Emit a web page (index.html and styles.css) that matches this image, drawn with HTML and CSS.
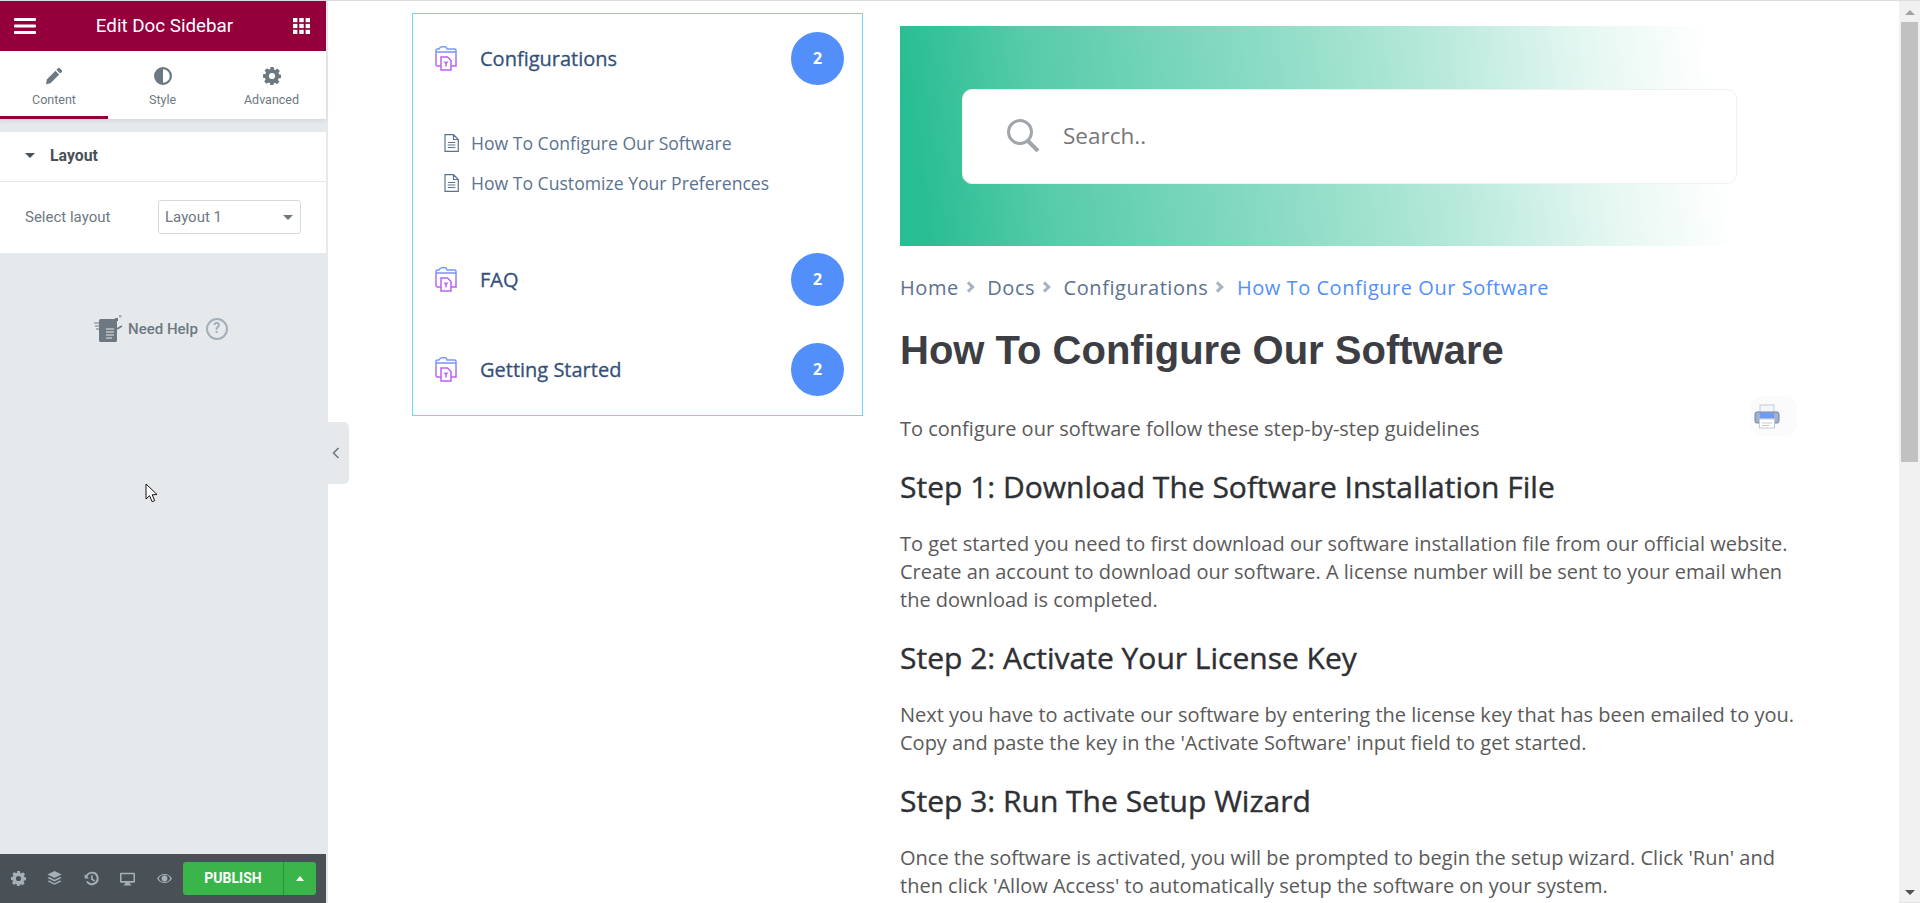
FILE: index.html
```html
<!DOCTYPE html>
<html lang="en">
<head>
    <meta charset="UTF-8">
    <meta name="viewport" content="width=device-width, initial-scale=1.0">
    <title>Edit Doc Sidebar</title>
    <link rel="stylesheet" href="styles.css">
</head>
<body>
    <aside class="editor">
        <header class="editor-head">
            <svg class="head-icon" viewBox="0 0 22 16"><rect width="22" height="3" y="0" rx="1"/><rect width="22" height="3" y="6.5" rx="1"/><rect width="22" height="3" y="13" rx="1"/></svg>
            <span class="editor-title">Edit Doc Sidebar</span>
            <svg class="head-icon grid-icon" viewBox="0 0 17 16"><rect width="4.4" height="4.2"/><rect x="6.3" width="4.4" height="4.2"/><rect x="12.6" width="4.4" height="4.2"/><rect y="5.9" width="4.4" height="4.2"/><rect x="6.3" y="5.9" width="4.4" height="4.2"/><rect x="12.6" y="5.9" width="4.4" height="4.2"/><rect y="11.8" width="4.4" height="4.2"/><rect x="6.3" y="11.8" width="4.4" height="4.2"/><rect x="12.6" y="11.8" width="4.4" height="4.2"/></svg>
        </header>

        <nav class="tabs">
            <div class="tab tab-active">
                <svg class="tab-icon" viewBox="0 0 18 18"><path d="M13 1.2a1.3 1.3 0 0 1 1.8 0l2 2a1.3 1.3 0 0 1 0 1.8l-1.6 1.6-3.8-3.8zM10.400 3.800l3.800 3.800-8.700 8.700-4.500 1 .8-4.700z"/></svg>
                <span>Content</span>
            </div>
            <div class="tab">
                <svg class="tab-icon" viewBox="0 0 18 18"><path fill-rule="evenodd" d="M9 0a9 9 0 1 1 0 18A9 9 0 0 1 9 0zm0 2.200v13.600a6.800 6.800 0 0 0 0-13.600z"/></svg>
                <span>Style</span>
            </div>
            <div class="tab">
                <svg class="tab-icon" viewBox="0 0 18 18"><path fill-rule="evenodd" d="M7.300 0h3.400l.4 2.400 1.300.6 2-1.400 2.400 2.400-1.400 2 .6 1.300 2 .4v3.400l-2.400.4-.6 1.300 1.400 2-2.400 2.400-2-1.400-1.300.6-.4 2H7.300l-.4-2.400-1.300-.6-2 1.400-2.400-2.400 1.400-2-.6-1.300-2-.4V7.300l2.400-.4.6-1.300-1.400-2 2.400-2.400 2 1.400 1.300-.6zM9 5.900a3.100 3.100 0 1 0 0 6.200 3.100 3.100 0 0 0 0-6.200z"/></svg>
                <span>Advanced</span>
            </div>
        </nav>

        <section class="panel">
            <div class="panel-title"><i class="caret"></i>Layout</div>
            <div class="panel-row">
                <span class="field-label">Select layout</span>
                <div class="select-box">Layout 1<i class="caret caret-small"></i></div>
            </div>
        </section>

        <div class="need-help">
            <svg class="help-doc" viewBox="0 0 30 28">
                <rect x="6" y="4" width="18" height="23" rx="1.500" fill="#6d7882"/>
                <path d="M1 8h7M2 11h6M3 14h5" stroke="#6d7882" stroke-width="1.200" fill="none"/>
                <path d="M13 14h8M13 17h8M13 20h8M13 23h6" stroke="#e6e9ec" stroke-width="1" fill="none"/>
                <path d="M24 14l5-3" stroke="#6d7882" stroke-width="1.500" fill="none"/>
                <rect x="22" y="3" width="3" height="3" fill="#6d7882"/>
                <rect x="26" y="0" width="2.500" height="2.500" fill="#a4afb7"/>
            </svg>
            <span>Need Help</span>
            <span class="help-q">?</span>
        </div>

        <footer class="editor-foot">
            <svg class="foot-icon" viewBox="0 0 18 18"><path fill-rule="evenodd" d="M7.300 0h3.400l.4 2.400 1.300.6 2-1.400 2.400 2.400-1.400 2 .6 1.300 2 .4v3.400l-2.400.4-.6 1.300 1.400 2-2.400 2.400-2-1.400-1.300.6-.4 2H7.300l-.4-2.400-1.300-.6-2 1.400-2.400-2.400 1.400-2-.6-1.300-2-.4V7.300l2.400-.4.6-1.300-1.400-2 2.400-2.400 2 1.400 1.300-.6zM9 5.900a3.100 3.100 0 1 0 0 6.200 3.100 3.100 0 0 0 0-6.200z"/></svg>
            <svg class="foot-icon" viewBox="0 0 18 18"><path d="M9 0l8.500 4.200L9 8.400.5 4.200z"/><path d="M2.500 7.300L9 10.500l6.500-3.200 2 1L9 12.500.5 8.300z"/><path d="M2.500 11.400L9 14.600l6.500-3.200 2 1L9 16.600.5 12.400z"/></svg>
            <svg class="foot-icon" viewBox="0 0 18 18"><path d="M9.500 1a8 8 0 1 1-6.900 12l1.900-1.100a5.800 5.800 0 1 0-.5-5l2 2H.8V3.700l1.700 1.700A8 8 0 0 1 9.500 1z"/><path d="M8.500 5h2v4.300l2.800 1.700-1 1.700-3.800-2.300z"/></svg>
            <svg class="foot-icon" viewBox="0 0 18 18"><path fill-rule="evenodd" d="M1 2h16a1 1 0 0 1 1 1v10a1 1 0 0 1-1 1h-5.500l.5 2h1.500v1.500h-9V16H6l.5-2H1a1 1 0 0 1-1-1V3a1 1 0 0 1 1-1zm.8 1.800V12h14.400V3.800z"/></svg>
            <svg class="foot-icon" viewBox="0 0 18 18"><path fill-rule="evenodd" d="M9 3.500c4 0 7.300 2.400 9 5.500-1.700 3.100-5 5.500-9 5.500S1.700 12.100 0 9c1.700-3.100 5-5.500 9-5.500zM9 5a6.500 6.500 0 0 0-6.900 4A6.500 6.500 0 0 0 9 13a6.500 6.500 0 0 0 6.900-4A6.500 6.500 0 0 0 9 5zm0 .5a3.500 3.500 0 1 1 0 7 3.500 3.500 0 0 1 0-7z"/></svg>
            <div class="publish">
                <span class="publish-main">PUBLISH</span>
                <span class="publish-more"><i class="caret-up"></i></span>
            </div>
        </footer>

        <div class="collapse-handle">
            <svg viewBox="0 0 8 12"><path d="M6.500 1L1.500 6l5 5" fill="none" stroke="#6d7882" stroke-width="1.600"/></svg>
        </div>

        <svg class="cursor" viewBox="0 0 13 20"><path d="M1 1v15l3.600-3.300 2.500 6 2.600-1.100-2.500-5.800 4.800-.3z" fill="#fff" stroke="#111" stroke-width="1"/></svg>
    </aside>

    <main class="page">
        <div class="doc-nav">
            <div class="doc-cat">
                <div class="cat-head">
                    <svg class="cat-icon" viewBox="0 0 22 26"><use href="#folderDoc"/></svg>
                    <span class="cat-name">Configurations</span>
                    <span class="cat-count">2</span>
                </div>
                <ul class="cat-list">
                    <li>
                        <svg class="file-icon" viewBox="0 0 15 18"><path d="M1 .7h8.500L14.300 5.500V17.300H1zM9.500 .7V5.500h4.800M3.800 8.500h7.500M3.800 11h7.500M3.800 13.500h7.500" fill="none" stroke="#5b7290" stroke-width="1.200"/></svg>
                        How To Configure Our Software
                    </li>
                    <li>
                        <svg class="file-icon" viewBox="0 0 15 18"><path d="M1 .7h8.500L14.300 5.500V17.300H1zM9.500 .7V5.500h4.800M3.800 8.500h7.500M3.800 11h7.500M3.800 13.500h7.500" fill="none" stroke="#5b7290" stroke-width="1.200"/></svg>
                        How To Customize Your Preferences
                    </li>
                </ul>
            </div>
            <div class="doc-cat">
                <div class="cat-head">
                    <svg class="cat-icon" viewBox="0 0 22 26"><use href="#folderDoc"/></svg>
                    <span class="cat-name">FAQ</span>
                    <span class="cat-count">2</span>
                </div>
            </div>
            <div class="doc-cat">
                <div class="cat-head">
                    <svg class="cat-icon" viewBox="0 0 22 26"><use href="#folderDoc"/></svg>
                    <span class="cat-name">Getting Started</span>
                    <span class="cat-count">2</span>
                </div>
            </div>
        </div>

        <article class="doc">
            <div class="hero">
                <div class="search-box">
                    <svg class="search-icon" viewBox="0 0 34 34"><circle cx="14" cy="14" r="11.500" fill="none" stroke="#a1a6ab" stroke-width="3"/><path d="M22 23l10 10" stroke="#a1a6ab" stroke-width="4"/></svg>
                    <span class="search-text">Search..</span>
                </div>
            </div>

            <div class="crumbs">
                <span>Home</span><i class="crumb-sep"></i>
                <span>Docs</span><i class="crumb-sep"></i>
                <span>Configurations</span><i class="crumb-sep"></i>
                <span class="crumb-current">How To Configure Our Software</span>
            </div>

            <h1>How To Configure Our Software</h1>

            <div class="intro">
                <p>To configure our software follow these step-by-step guidelines</p>
                <div class="print-btn">
                    <svg viewBox="0 0 26 25">
                        <rect x="6" y="1" width="14" height="9" fill="#f3f5f9" stroke="#c3cad6"/>
                        <rect x="1" y="8" width="24" height="11" rx="2" fill="#9fb2cc" stroke="#6f84a3"/>
                        <rect x="6" y="9" width="14" height="5" fill="#6f9cf2"/>
                        <rect x="5.500" y="15" width="15" height="9" fill="#fff" stroke="#c3cad6"/>
                        <path d="M8 19h10M8 21.500h7" stroke="#c3cad6"/>
                    </svg>
                </div>
            </div>

            <h2>Step 1: Download The Software Installation File</h2>
            <p>To get started you need to first download our software installation file from our official website. Create an account to download our software. A license number will be sent to your email when the download is completed.</p>

            <h2>Step 2: Activate Your License Key</h2>
            <p>Next you have to activate our software by entering the license key that has been emailed to you. Copy and paste the key in the 'Activate Software' input field to get started.</p>

            <h2>Step 3: Run The Setup Wizard</h2>
            <p>Once the software is activated, you will be prompted to begin the setup wizard. Click 'Run' and then click 'Allow Access' to automatically setup the software on your system.</p>
        </article>

        <div class="scrollbar">
            <i class="arrow-up"></i>
            <div class="scroll-thumb"></div>
            <i class="arrow-down"></i>
        </div>
    </main>

    <!-- icon shared by the three doc categories -->
    <svg class="icon-defs" width="0" height="0">
        <defs>
            <linearGradient id="folderGrad" x1="0" y1="0" x2="0" y2="1">
                <stop offset="0" stop-color="#6aa2f7"/>
                <stop offset="1" stop-color="#c35cf5"/>
            </linearGradient>
            <g id="folderDoc">
                <path d="M1 6V4.500Q1 3 2.500 3H4Q5 .8 7 .8h3.500Q11.500 .8 12 3h7.500Q21 3 21 4.500V20H14M6 20H2.500Q1 20 1 18.500V6H21" fill="none" stroke="url(#folderGrad)" stroke-width="1.500"/>
                <path d="M6 11h6.500L16 14.500V24H6z" fill="#fff" stroke="#bd62f6" stroke-width="1.500"/>
                <path d="M8.500 15.500h5L11.800 18v2.500h-1.600V18z" fill="#b576ee"/>
            </g>
        </defs>
    </svg>
</body>
</html>
```

FILE: styles.css
```css
* {
    box-sizing: border-box;
}
html, body {
    height: 100%;
}
body {
    display: flex;
    margin: 0;
    overflow: hidden;
    border-top: 1px solid #dcdde1;
    background-color: #fff;
    font-family: "Open Sans", sans-serif;
}

/* editor panel on the left */
.editor {
    position: relative;
    display: flex;
    flex-direction: column;
    flex: none;
    width: 328px;
    padding-right: 2px;
    background-color: #e6e9ec;
    font-family: Roboto, sans-serif;
}
.editor-head {
    display: flex;
    align-items: center;
    justify-content: space-between;
    height: 50px;
    padding: 0 16px 0 14px;
    background-color: #93003c;
    color: #fff;
}
.editor-title {
    font-size: 18.8px;
}
.head-icon {
    width: 22px;
    height: 16px;
    fill: #fff;
}
.grid-icon {
    width: 17px;
}
.tabs {
    display: flex;
    height: 68px;
    background-color: #fff;
    box-shadow: 0 2px 4px rgba(0, 0, 0, 0.08);
}
.tab {
    display: flex;
    flex: 1;
    flex-direction: column;
    align-items: center;
    padding-top: 16px;
    color: #6d7882;
    font-size: 12.5px;
}
.tab-active {
    flex: none;
    width: 108px;
    border-bottom: 3px solid #93003c;
}
.tab-icon {
    width: 18px;
    height: 18px;
    margin-bottom: 7px;
    fill: #6d7882;
}
.panel {
    margin-top: 13px;
    background-color: #fff;
}
.panel-title {
    display: flex;
    align-items: center;
    height: 50px;
    padding: 0 0 2px 25px;
    border-bottom: 1px solid #e6e9ec;
    color: #495157;
    font-size: 15.8px;
    font-weight: 700;
}
.caret {
    width: 0;
    height: 0;
    margin-right: 15px;
    border-top: 5px solid #495157;
    border-right: 5px solid transparent;
    border-left: 5px solid transparent;
}
.panel-row {
    display: flex;
    align-items: center;
    justify-content: space-between;
    height: 71px;
    padding: 0 25px 1px;
}
.field-label {
    color: #6d7882;
    font-size: 15px;
}
.select-box {
    display: flex;
    align-items: center;
    justify-content: space-between;
    width: 143px;
    height: 34px;
    padding: 0 7px 0 6px;
    border: 1px solid #d5dadf;
    border-radius: 3px;
    color: #6d7882;
    font-size: 15px;
}
.caret-small {
    margin-right: 0;
    border-top-color: #6d7882;
}
.need-help {
    display: flex;
    align-items: center;
    margin: 62px 0 0 93px;
    color: #6d7882;
    font-size: 15px;
    font-weight: 500;
}
.help-doc {
    width: 30px;
    height: 28px;
    margin-right: 5px;
}
.help-q {
    width: 22px;
    height: 22px;
    margin-left: 8px;
    border: 2.5px solid #a4afb7;
    border-radius: 50%;
    color: #a4afb7;
    font-size: 14px;
    font-weight: 700;
    line-height: 17px;
    text-align: center;
}
.editor-foot {
    display: flex;
    align-items: center;
    height: 49px;
    margin-top: auto;
    padding: 0 10px 0 10.5px;
    background-color: #495157;
}
.foot-icon {
    flex: none;
    width: 15px;
    height: 15px;
    margin-right: 21.5px;
    fill: #a4afb7;
}
.publish {
    display: flex;
    height: 33px;
    margin-left: -10px;
    border-radius: 3px;
    background-color: #39b54a;
    color: #fff;
}
.publish-main {
    width: 101px;
    border-right: 1px solid #2d8f3b;
    font-size: 14px;
    font-weight: 700;
    line-height: 33px;
    text-align: center;
}
.publish-more {
    display: flex;
    align-items: center;
    justify-content: center;
    width: 32px;
}
.caret-up {
    width: 0;
    height: 0;
    border-right: 4.500px solid transparent;
    border-bottom: 5px solid #fff;
    border-left: 4.500px solid transparent;
}
.collapse-handle {
    position: absolute;
    top: 421px;
    left: 328px;
    z-index: 2;
    display: flex;
    align-items: center;
    width: 21px;
    height: 62px;
    padding-left: 4px;
    border-radius: 0 5px 5px 0;
    background-color: #e6e9ec;
}
.collapse-handle svg {
    width: 8px;
    height: 12px;
}
.cursor {
    position: absolute;
    top: 482px;
    left: 145px;
    width: 13px;
    height: 20px;
}

/* page preview */
.page {
    display: flex;
    flex: 1;
    min-width: 0;
    padding-left: 84px;
}
.doc-nav {
    flex: none;
    align-self: flex-start;
    width: 451px;
    margin-top: 12px;
    padding-bottom: 19px;
    border: 1px solid #6dd5fb;
}
.cat-head {
    display: flex;
    align-items: center;
    height: 53px;
    margin-top: 18px;
    padding: 0 18px 0 22px;
}
.doc-cat + .doc-cat {
    margin-top: 37px;
}
.cat-icon {
    flex: none;
    width: 22px;
    height: 26px;
    margin-right: 23px;
}
.cat-name {
    flex: 1;
    color: #34507a;
    font-size: 20px;
    -webkit-text-stroke: 0.3px #34507a;
}
.cat-count {
    width: 53px;
    height: 53px;
    border-radius: 50%;
    background-color: #528ffb;
    color: #fff;
    font-size: 16px;
    font-weight: 700;
    line-height: 53px;
    text-align: center;
}
.cat-list {
    margin: 0;
    padding: 38px 0 13px 31px;
    list-style: none;
}
.cat-list li {
    display: flex;
    align-items: center;
    height: 40px;
    color: #5b7290;
    font-size: 17.6px;
}
.file-icon {
    width: 15px;
    height: 18px;
    margin-right: 12px;
}
.doc {
    flex: none;
    width: 900px;
    margin-left: 37px;
    padding-top: 25px;
}
.hero {
    display: flex;
    align-items: center;
    height: 220px;
    padding-left: 62px;
    background: linear-gradient(82deg,
        #28bd92 3%,
        rgba(40, 189, 146, 0.78) 18%,
        rgba(40, 189, 146, 0.52) 46%,
        rgba(40, 189, 146, 0.34) 64%,
        rgba(40, 189, 146, 0.12) 82%,
        rgba(40, 189, 146, 0) 96%);
    background-size: 840px 100%;
    background-repeat: no-repeat;
}
.search-box {
    display: flex;
    align-items: center;
    width: 775px;
    height: 95px;
    padding: 0 0 2px 43px;
    border: 1px solid #eef0f1;
    border-radius: 10px;
    background-color: #fff;
}
.search-icon {
    width: 34px;
    height: 34px;
    margin-right: 23px;
}
.search-text {
    color: #777;
    font-size: 22.5px;
}
.crumbs {
    display: flex;
    align-items: center;
    height: 28px;
    margin-top: 27px;
    color: #5b7290;
    font-size: 20px;
    letter-spacing: 0.55px;
}
.crumb-sep {
    width: 8px;
    height: 8px;
    margin: 0 14.5px 0 6px;
    border-top: 3px solid #a9b4c2;
    border-right: 3px solid #a9b4c2;
    transform: rotate(45deg);
}
.crumb-current {
    color: #528ffb;
}
h1 {
    margin: 25px 0 0;
    color: #3d3e43;
    font-family: "Liberation Sans", Arial, sans-serif;
    font-size: 40px;
    font-weight: 700;
    line-height: 48px;
}
h2 {
    margin: 24px 0 0;
    color: #2e3033;
    font-size: 30px;
    font-weight: 400;
    line-height: 40px;
    -webkit-text-stroke: 0.4px #2e3033;
}
p {
    margin: 23px 0 0;
    color: #5a5a5a;
    font-size: 20px;
    line-height: 28px;
}
.intro {
    display: flex;
    justify-content: space-between;
    margin-top: 41px;
}
.intro p {
    margin: 0;
}
.print-btn {
    display: flex;
    align-items: center;
    justify-content: center;
    width: 47px;
    height: 40px;
    margin: -19px 3px 0 0;
    padding-right: 13px;
    border-radius: 12px;
    background-color: #fbfbfb;
}
.print-btn svg {
    width: 26px;
    height: 25px;
}
.scrollbar {
    display: flex;
    flex: none;
    flex-direction: column;
    align-items: center;
    width: 21px;
    margin-left: auto;
    background-color: #f1f1f1;
    border-bottom: 1px solid #e3e3e3;
}
.arrow-up, .arrow-down {
    width: 0;
    height: 0;
    border-right: 5px solid transparent;
    border-left: 5px solid transparent;
}
.arrow-up {
    margin-top: 9px;
    border-bottom: 5px solid #a3a3a3;
}
.arrow-down {
    margin-top: auto;
    margin-bottom: 7px;
    border-top: 5px solid #505050;
}
.scroll-thumb {
    width: 17px;
    height: 440px;
    margin-top: 7px;
    background-color: #c1c1c1;
}
.icon-defs {
    position: absolute;
}
```
